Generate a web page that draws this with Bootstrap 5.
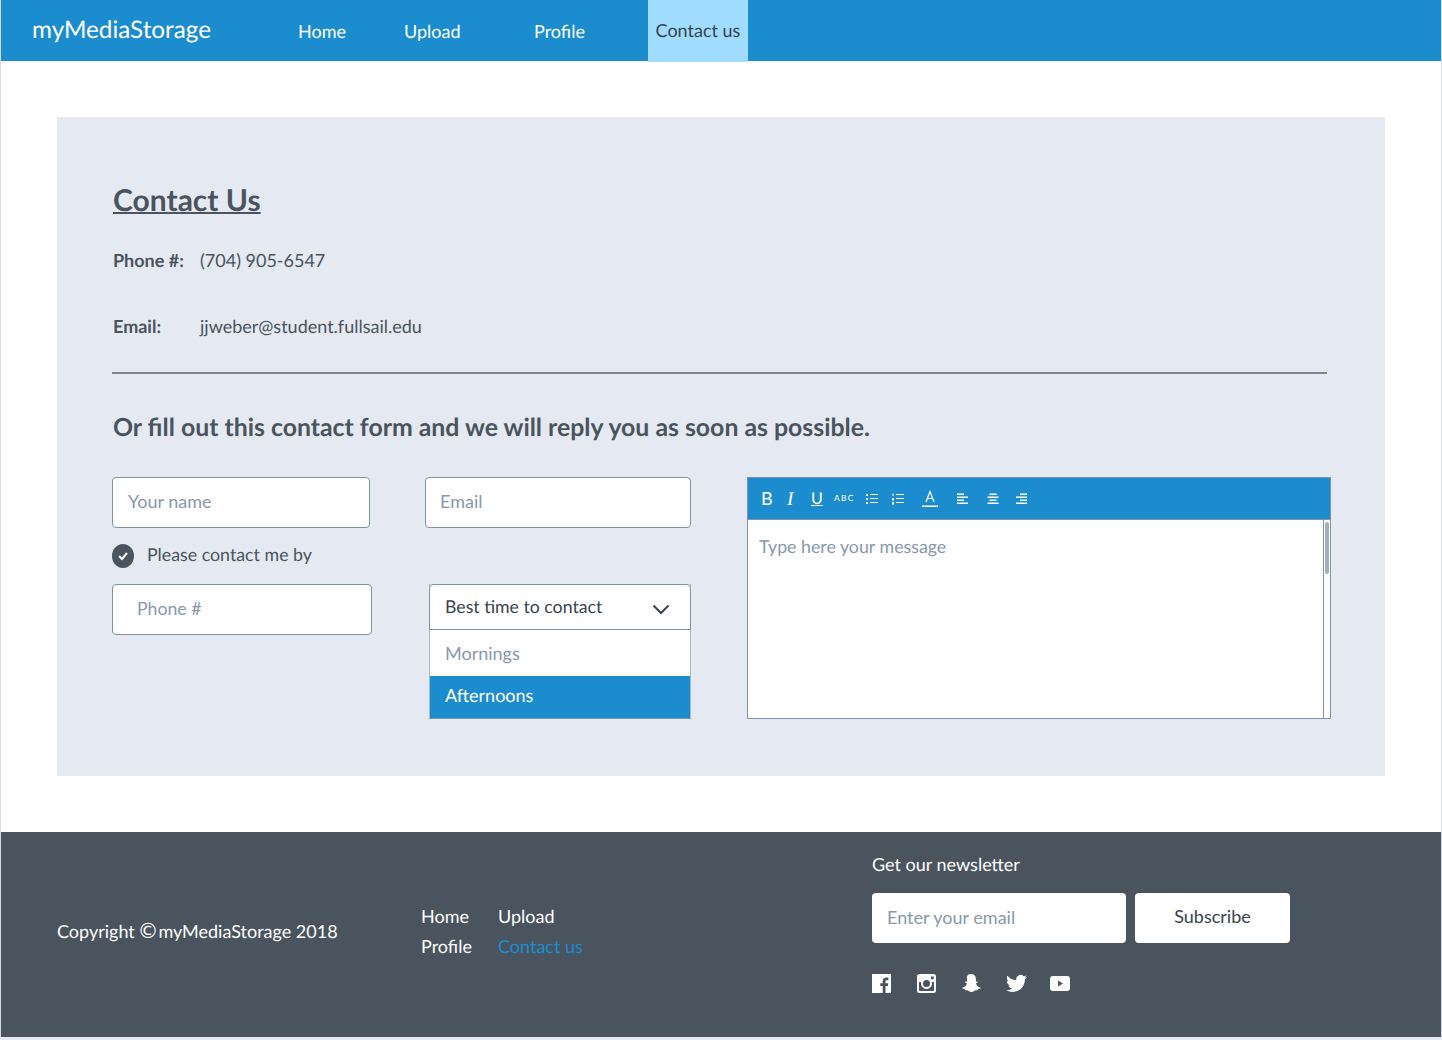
<!DOCTYPE html>
<html lang="en"><head><meta charset="utf-8">
<link href="https://cdn.jsdelivr.net/npm/bootstrap@5.3.0/dist/css/bootstrap.min.css" rel="stylesheet">
<style>
html,body{height:1040px;overflow:hidden}
body{font-family:Lato,sans-serif;color:#4a545e;background:#e4e9f2;font-size:18px;text-rendering:geometricPrecision}
.page-frame{width:1442px;height:1037px;background:#fff;border-left:1px solid #d5dbe6;border-right:1px solid #d5dbe6;display:flex;flex-direction:column}
.top-bar{height:61px;background:#1b8dce;display:flex;align-items:flex-start;color:#fff;flex:none}
.brand-name{font-size:24.250px;color:#fff;width:297px;padding-left:31px;line-height:60px;text-decoration:none}
.top-link{color:#fff;text-decoration:none;line-height:62px;white-space:nowrap}
.nav-w1{width:106px}.nav-w2{width:130px}.nav-w3{width:114px}
.top-active{background:#9fdcff;color:#37434d;width:100px;height:62px;line-height:61px;text-align:center;position:relative}
.panel-box{margin:56px 56px;height:659px;background:#e4e9f2;padding:62px 56px 0;flex:none}
.main-title{font-size:30px;font-weight:700;text-decoration:underline;color:#4a545e;line-height:42px;margin:0 0 27px;text-decoration-thickness:2px}
.info-row{display:flex;line-height:24px}
.info-gap{margin-top:42px}
.info-key{font-weight:700;width:87px}
.rule-line{border:0;border-top:2px solid #7d8694;opacity:1;margin:34px 2px 0 -1px;width:1215px}
.sub-title{font-size:24.830px;font-weight:700;margin:36px 0 0;line-height:34px;color:#4a545e}
.field-box{height:51px;border:1px solid #7f93ab;border-radius:4px;padding:0 15px 4px;font-size:18px;background:#fff;color:#37434d}
.field-box::placeholder{color:#8898ad;opacity:1}
.field-mail{padding-left:14px}
.field-wide{width:260px;padding-left:24px;padding-bottom:2px;font-size:17.700px}
.form-area{display:grid;grid-template-columns:258px 266px 584px;column-gap:55px;margin-top:33px;margin-left:-1px}
.check-line{height:24px;margin-top:16px;margin-bottom:16px}
.check-dot{width:22px;height:24px;border-radius:50%;background:#4a545e;display:flex;align-items:center;justify-content:center;flex:none}
.check-label{margin-left:5px;margin-top:-4px;font-size:17.800px}
.drop-gap{height:56px}
.drop-box{width:262px;border-left:1px solid #a9b6c7;border-right:1px solid #a9b6c7;border-bottom:1px solid #7f93ab;margin-left:4px}
.drop-head{height:46px;border:1px solid #7f93ab;border-radius:4px 4px 0 0;margin:0 -1px;background:#fff;padding:1px 20px 0 15px;display:flex;justify-content:space-between;align-items:center;color:#37434d;font-size:17.700px}
.drop-arrow{margin-top:4px}
.drop-opt{height:46px;background:#fff;padding:0 15px;line-height:46px;color:#8898ad}
.drop-sel{height:42px;background:#1b8dce;color:#fff;padding:0 15px;line-height:39px}
.editor-box{border:1px solid #7f93ab;height:242px;width:584px;margin-left:1px;background:#fff;display:flex;flex-direction:column}
.editor-bar{height:42px;background:#1b8dce;display:flex;align-items:center;color:#fff;padding-left:13px;flex:none;border-bottom:1px solid #7f93ab}
.tb-item{display:flex;align-items:center;flex:none;height:20px}
.tb-b{width:26px;font-size:18px}
.tb-i{width:24px;font-size:19px;font-style:italic;font-family:"Liberation Serif",serif;padding-top:3px}
.tb-u{width:23px;font-size:16px;text-decoration:underline}
.tb-abc{width:32px;font-size:8.500px;letter-spacing:1.200px}
.tb-26{width:26px}.tb-30{width:30px}.tb-35{width:35px}.tb-28{width:28px}
.editor-text{flex:1;position:relative;padding:14px 11px;color:#8898ad;line-height:24px;font-size:17.800px}
.scroll-track{position:absolute;right:0;top:0;bottom:0;width:7px;border-left:1px solid #7f93ab;background:#fff}
.scroll-thumb{position:absolute;left:1px;top:2px;width:4px;height:52px;background:#a3aebc;border-radius:2px}
.foot-bar{flex:1;background:#4a545e;color:#fff}
.foot-inner{display:flex;height:100%}
.foot-copy{width:420px;padding-left:56px;padding-top:87px;line-height:24px}
.foot-mark{font-family:"DejaVu Sans",sans-serif;font-size:21px;line-height:20px;margin-left:-2px}
.foot-links{width:451px;padding-top:69px;display:grid;grid-template-columns:77px 1fr;grid-auto-rows:30px;align-content:start;line-height:30px}
.foot-links a{color:#fff;text-decoration:none}
.foot-links a.foot-on{color:#1b8dce}
.news-side{padding-top:20px}
.news-line{line-height:24px}
.news-row{display:flex;gap:9px;margin-top:17px}
.foot-field{width:254px;height:50px;border:0;border-radius:4px;padding:0 15px 3px;font-size:18px}
.foot-field::placeholder{color:#8898ad;opacity:1}
.sub-btn{width:155px;height:50px;background:#fff;color:#37434d;border:0;border-radius:4px;font-size:18px;padding:0 0 3px}
.social-row{display:flex;margin-top:31px;align-items:center}
.soc-slot{width:45px;flex:none;display:flex}
.soc-slot:nth-child(even){width:44px}
</style></head><body>
<div class="page-frame">
<nav class="top-bar">
<a class="brand-name" href="#">myMediaStorage</a>
<a class="top-link nav-w1" href="#">Home</a>
<a class="top-link nav-w2" href="#">Upload</a>
<a class="top-link nav-w3" href="#">Profile</a>
<a class="top-link top-active" href="#">Contact us</a>
</nav>
<section class="panel-box">
<h1 class="main-title">Contact Us</h1>
<div class="info-row"><div class="info-key">Phone #:</div><div>(704) 905-6547</div></div>
<div class="info-row info-gap"><div class="info-key">Email:</div><div>jjweber@student.fullsail.edu</div></div>
<hr class="rule-line">
<h2 class="sub-title">Or fill out this contact form and we will reply you as soon as possible.</h2>
<div class="form-area">
<div>
<input class="field-box w-100" placeholder="Your name">
<div class="d-flex align-items-center gap-2 check-line"><span class="check-dot"><svg width="12" height="10" viewBox="0 0 12 10"><path d="M2 5l3 3 5-6" fill="none" stroke="#fff" stroke-width="2"/></svg></span><span class="check-label">Please contact me by</span></div>
<input class="field-box field-wide" placeholder="Phone #">
</div>
<div>
<input class="field-box field-mail w-100" placeholder="Email">
<div class="drop-gap"></div>
<div class="drop-box">
<div class="drop-head"><span>Best time to contact</span><svg class="drop-arrow" width="18" height="11" viewBox="0 0 18 11"><path d="M1.500 1.500L9 9l7.500-7.500" fill="none" stroke="#37434d" stroke-width="2"/></svg></div>
<div class="drop-opt">Mornings</div>
<div class="drop-sel">Afternoons</div>
</div>
</div>
<div class="editor-box">
<div class="editor-bar">
<span class="tb-item tb-b">B</span>
<span class="tb-item tb-i">I</span>
<span class="tb-item tb-u">U</span>
<span class="tb-item tb-abc">ABC</span>
<span class="tb-item tb-26"><svg width="12" height="12" viewBox="0 0 12 12" fill="#fff"><rect x="0" y="1" width="2" height="2"/><rect x="0" y="5" width="2" height="2"/><rect x="0" y="9" width="2" height="2"/><rect x="4" y="1" width="8" height="1"/><rect x="4" y="5" width="8" height="1"/><rect x="4" y="9" width="8" height="1"/></svg></span>
<span class="tb-item tb-30"><svg width="12" height="12" viewBox="0 0 12 12" fill="#fff"><rect x="0.500" y="0.500" width="1" height="2.500"/><rect x="0" y="5" width="2" height="2.500"/><rect x="0" y="9" width="2" height="2.500"/><rect x="4" y="1" width="8" height="1"/><rect x="4" y="5" width="8" height="1"/><rect x="4" y="9" width="8" height="1"/></svg></span>
<span class="tb-item tb-35"><svg width="16" height="18" viewBox="0 0 16 18"><path d="M4 12L8 1.500 12 12M5.300 8.500h5.400" fill="none" stroke="#fff" stroke-width="1.200"/><rect y="15.500" width="16" height="1.500" fill="#fff"/></svg></span>
<span class="tb-item tb-30"><svg width="12" height="12" viewBox="0 0 12 12" fill="#fff"><rect width="7" height="1.500" y="0.500"/><rect width="11" height="1.500" y="3.500"/><rect width="7" height="1.500" y="6.500"/><rect width="11" height="1.500" y="9.500"/></svg></span>
<span class="tb-item tb-28"><svg width="12" height="12" viewBox="0 0 12 12" fill="#fff"><rect x="2.500" width="7" height="1.500" y="0.500"/><rect width="11" x="0.500" height="1.500" y="3.500"/><rect x="2.500" width="7" height="1.500" y="6.500"/><rect width="11" x="0.500" height="1.500" y="9.500"/></svg></span>
<span class="tb-item"><svg width="12" height="12" viewBox="0 0 12 12" fill="#fff"><rect x="5" width="7" height="1.500" y="0.500"/><rect width="11" x="1" height="1.500" y="3.500"/><rect x="5" width="7" height="1.500" y="6.500"/><rect width="11" x="1" height="1.500" y="9.500"/></svg></span>
</div>
<div class="editor-text">Type here your message<div class="scroll-track"><div class="scroll-thumb"></div></div></div>
</div>
</div>
</section>
<footer class="foot-bar"><div class="foot-inner">
<div class="foot-copy">Copyright <span class="foot-mark">©</span>myMediaStorage 2018</div>
<div class="foot-links"><a href="#">Home</a><a href="#">Upload</a><a href="#">Profile</a><a class="foot-on" href="#">Contact us</a></div>
<div class="news-side">
<div class="news-line">Get our newsletter</div>
<div class="news-row"><input class="foot-field" placeholder="Enter your email"><button class="sub-btn">Subscribe</button></div>
<div class="social-row">
<span class="soc-slot"><svg width="19" height="19" viewBox="0 0 19 19"><path fill="#fff" fill-rule="evenodd" d="M0 0h19v19H13.500v-7h2.400l.4-2.800h-2.800V7.500c0-.8.300-1.300 1.400-1.300h1.500V3.700c-.3 0-1.100-.1-2.100-.1-2.200 0-3.600 1.300-3.600 3.700v1.900H8.300V12h2.400v7H0z"/></svg></span>
<span class="soc-slot"><svg width="19" height="19" viewBox="0 0 19 19"><path fill="#fff" fill-rule="evenodd" d="M2.500 0h14A2.500 2.500 0 0 1 19 2.500v14a2.500 2.500 0 0 1-2.500 2.500h-14A2.500 2.500 0 0 1 0 16.500v-14A2.500 2.500 0 0 1 2.500 0zM14 2.500v2.700h2.700V2.500zM2 8v8a1 1 0 0 0 1 1h13a1 1 0 0 0 1-1V8h-2.200a5.500 5.500 0 1 1-10.600 0zM9.500 6a3.500 3.500 0 1 0 0 7 3.500 3.500 0 0 0 0-7z"/></svg></span>
<span class="soc-slot"><svg width="20" height="19" viewBox="1.500 2 21 20"><path fill="#fff" d="M12 2c3 0 5.200 2.200 5.200 5.200 0 1 0 2-.1 2.800.6.300 1.300-.3 1.800 0 .6.400.3 1-.3 1.300-.5.200-1.200.4-1.200 1 .3 1.500 2 3.500 4.400 4 .6.200.4.800-.1 1-.7.300-1.600.3-2 .6-.3.300-.1 1-.5 1.200-.6.200-1.500-.2-2.500.1-1.200.4-2 1.800-4.200 1.800s-3-1.400-4.200-1.800c-1-.3-1.900.1-2.500-.1-.4-.2-.2-.9-.5-1.200-.4-.3-1.300-.3-2-.6-.5-.2-.7-.8-.1-1 2.400-.5 4.100-2.500 4.400-4 0-.6-.7-.8-1.200-1-.6-.3-.9-.9-.3-1.300.5-.3 1.200.3 1.800 0-.1-.8-.1-1.800-.1-2.800C6.800 4.200 9 2 12 2z"/></svg></span>
<span class="soc-slot"><svg width="21" height="19" viewBox="0 0 24 20"><path fill="#fff" transform="translate(0 -2)" d="M23.953 4.570a10 10 0 0 1-2.825.775 4.958 4.958 0 0 0 2.163-2.723c-.951.555-2.005.959-3.127 1.184a4.920 4.920 0 0 0-8.384 4.482C7.690 8.095 4.067 6.130 1.640 3.162a4.822 4.822 0 0 0-.666 2.475c0 1.710.870 3.213 2.188 4.096a4.904 4.904 0 0 1-2.228-.616v.060a4.923 4.923 0 0 0 3.946 4.827 4.996 4.996 0 0 1-2.212.085 4.936 4.936 0 0 0 4.604 3.417 9.867 9.867 0 0 1-6.102 2.105c-.390 0-.779-.023-1.170-.067a13.995 13.995 0 0 0 7.557 2.209c9.053 0 13.998-7.496 13.998-13.985 0-.210 0-.420-.015-.630A9.935 9.935 0 0 0 24 4.590z"/></svg></span>
<span class="soc-slot"><svg width="20" height="15" viewBox="0 0 20 15"><path fill="#fff" fill-rule="evenodd" d="M3 0h14a3 3 0 0 1 3 3v9a3 3 0 0 1-3 3H3a3 3 0 0 1-3-3V3a3 3 0 0 1 3-3zM8 4.500v6l5-3z"/></svg></span>
</div>
</div>
</div></footer>
</div>
<script src="https://cdn.jsdelivr.net/npm/bootstrap@5.3.0/dist/js/bootstrap.bundle.min.js"></script>
</body></html>
